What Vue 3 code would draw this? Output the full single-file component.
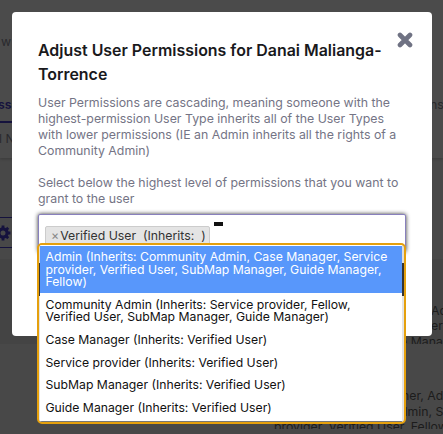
<template>
  <div class="screen">
    <div class="page" aria-hidden="true">
      <div class="band band-top"></div>
      <div class="band band-rows"></div>
      <span v-for="item in fragments" :key="item.name" class="fragment" :class="item.name">{{ item.text }}</span>
      <div class="tab-line"></div>
      <div class="gear-button">
        <svg width="16" height="16" viewBox="0 0 16 16">
          <circle cx="8" cy="8" r="4.1" fill="none" stroke="#15123d" stroke-width="3.2" />
          <path d="M8 .6V3M8 13V15.4M.6 8H3M13 8H15.4M2.8 2.8L4.4 4.4M11.6 11.6L13.2 13.2M2.8 13.2L4.4 11.6M11.6 4.4L13.2 2.8" stroke="#15123d" stroke-width="2.8" />
        </svg>
      </div>
    </div>

    <section class="modal">
      <button type="button" class="modal-close" aria-label="Close">
        <svg width="16" height="16" viewBox="0 0 16 16">
          <path d="M3 3L13 13M13 3L3 13" stroke="#6f7283" stroke-width="4.6" stroke-linecap="round" />
        </svg>
      </button>
      <h2>Adjust User Permissions for Danai Malianga-<br />Torrence</h2>
      <p>
        User Permissions are cascading, meaning someone with the<br />
        highest-permission User Type inherits all of the User Types<br />
        with lower permissions (IE an Admin inherits all the rights of a<br />
        Community Admin)
      </p>
      <p>
        Select below the highest level of permissions that you want to<br />
        grant to the user
      </p>
      <div class="select-box">
        <span class="tag"><i>×</i>Verified User&nbsp; (Inherits:&nbsp; )</span>
        <span class="caret"></span>
      </div>
    </section>

    <div class="dropdown">
      <ul>
        <li v-for="(option, index) in options" :key="index" :class="{ active: index === 0 }">
          <div v-for="line in option" :key="line">{{ line }}</div>
        </li>
      </ul>
    </div>
  </div>
</template>

<script setup>
const options = [
  [
    "Admin (Inherits: Community Admin, Case Manager, Service",
    "provider, Verified User, SubMap Manager, Guide Manager,",
    "Fellow)",
  ],
  [
    "Community Admin (Inherits: Service provider, Fellow,",
    "Verified User, SubMap Manager, Guide Manager)",
  ],
  ["Case Manager (Inherits: Verified User)"],
  ["Service provider (Inherits: Verified User)"],
  ["SubMap Manager (Inherits: Verified User)"],
  ["Guide Manager (Inherits: Verified User)"],
];

const fragments = [
  { name: "nav", text: "w" },
  { name: "tab", text: "ss" },
  { name: "column", text: "l N" },
  { name: "heading", text: "ns" },
  { name: "row-a1", text: "Ad" },
  { name: "row-a2", text: "eri" },
  { name: "row-a3", text: "e Manag" },
  { name: "row-b1", text: "ner, Adm" },
  { name: "row-b2", text: "dmin, Se" },
  { name: "row-b3", text: "provider, Verified User, Fellow" },
];
</script>

<style>
body {
  margin: 0;
  overflow: hidden;
}
</style>

<style scoped>
.screen {
  position: relative;
  width: 443px;
  height: 434px;
  overflow: hidden;
  background: #484848;
  font-family: Inter, "Liberation Sans", sans-serif;
}

.page {
  position: absolute;
  inset: 0;
}

.band {
  position: absolute;
  left: 0;
  right: 0;
}

.band-top {
  top: 0;
  height: 158px;
  background: #4b4b4b;
  box-shadow: 0 1px 3px rgba(0, 0, 0, 0.2);
}

.band-rows {
  top: 259px;
  height: 85px;
  background: #444444;
}

.fragment {
  position: absolute;
  color: #1c1c1c;
  font-size: 12.3px;
  line-height: 16px;
  white-space: nowrap;
}

.nav {
  top: 34px;
  left: 1px;
  color: #29292d;
}

.tab {
  top: 97px;
  left: -2px;
  color: #15123d;
  font-weight: 600;
}

.column {
  top: 131px;
  left: -1px;
  color: #29292d;
}

.heading {
  top: 97px;
  left: 430px;
  color: #29292d;
}

.row-a1 {
  top: 303px;
  left: 431px;
}

.row-a2 {
  top: 318px;
  left: 431px;
}

.row-a3 {
  top: 334px;
  left: 400px;
  height: 10px;
  overflow: hidden;
}

.row-b1 {
  top: 388px;
  left: 402px;
}

.row-b2 {
  top: 404px;
  left: 400px;
}

.row-b3 {
  top: 419px;
  left: 274px;
  height: 10px;
  overflow: hidden;
}

.tab-line {
  position: absolute;
  top: 121px;
  left: 0;
  width: 12px;
  height: 2px;
  background: #15123d;
}

.gear-button {
  position: absolute;
  top: 217px;
  left: -10px;
  box-sizing: border-box;
  width: 30px;
  height: 31px;
  padding: 7px 0 0 4px;
  border: 1px solid #15123d;
}

.modal {
  position: absolute;
  top: 12px;
  left: 12px;
  box-sizing: border-box;
  width: 420px;
  height: 324px;
  padding: 27px 26px 26px;
  border-radius: 4px;
  background: #ffffff;
}

.modal-close {
  position: absolute;
  top: 20px;
  right: 19px;
  width: 16px;
  height: 16px;
  padding: 0;
  border: 0;
  background: none;
}

.modal-close svg {
  display: block;
}

.modal h2 {
  margin: 0;
  color: #19191c;
  font-size: 15.95px;
  font-weight: 600;
  line-height: 24px;
  white-space: nowrap;
}

.modal p {
  margin: 8px 0 16px;
  color: #747485;
  font-size: 12.35px;
  line-height: 16px;
  white-space: nowrap;
}

.modal p + p {
  margin-bottom: 7px;
}

.select-box {
  display: flex;
  align-items: flex-start;
  box-sizing: border-box;
  width: 368px;
  height: 38px;
  padding: 11px 6px 0;
  border: 1px solid #8880bd;
  border-radius: 2px;
  background: #ffffff;
  box-shadow: 0 0 4px rgba(0, 0, 0, 0.8);
}

.tag {
  box-sizing: border-box;
  width: 165px;
  height: 19px;
  padding-left: 5px;
  border: 1px solid #cccccc;
  border-radius: 2px;
  background: #e4e4e4;
  color: #333333;
  font-size: 12.3px;
  line-height: 17px;
  white-space: nowrap;
}

.tag i {
  margin-right: 1px;
  color: #888888;
  font-style: normal;
}

.caret {
  width: 9px;
  height: 4px;
  margin: -4px 0 0 4px;
  background: #111111;
}

.dropdown {
  position: absolute;
  top: 243px;
  left: 37px;
  box-sizing: border-box;
  width: 369px;
  height: 181px;
  border: 2px solid #e5a00d;
  border-radius: 5px;
  background: linear-gradient(#dddddd 18px, #343436 18px, #343436 51px, #e4e4e4 51px);
  overflow: hidden;
}

.dropdown ul {
  box-sizing: border-box;
  height: 177px;
  margin: 0 2px 0 1px;
  padding: 1px 0 0;
  border-bottom: 1px solid #777777;
  background: #ffffff;
  list-style: none;
}

.dropdown li {
  padding: 5px 5px 5px 5.5px;
  color: #111111;
  font-size: 12.22px;
  line-height: 12.6px;
  white-space: nowrap;
}

.dropdown li.active {
  margin-bottom: 1px;
  padding-bottom: 4px;
  background: #5897fb;
  color: #ffffff;
}
</style>
